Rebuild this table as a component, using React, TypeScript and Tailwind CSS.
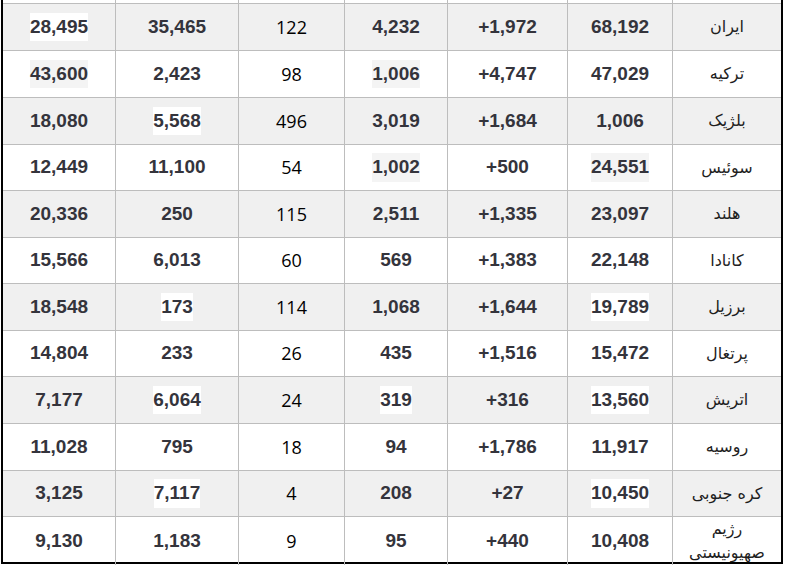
type Cell = { v: string; hl?: boolean };

const rows: { name: string[]; c: (string | Cell)[] }[] = [
  { name: ['ایران'], c: [{ v: '28,495', hl: true }, '35,465', '122', '4,232', '+1,972', '68,192'] },
  { name: ['ترکیه'], c: [{ v: '43,600', hl: true }, '2,423', '98', { v: '1,006', hl: true }, '+4,747', '47,029'] },
  { name: ['بلژیک'], c: ['18,080', { v: '5,568', hl: true }, '496', '3,019', '+1,684', '1,006'] },
  { name: ['سوئیس'], c: ['12,449', '11,100', '54', { v: '1,002', hl: true }, '+500', { v: '24,551', hl: true }] },
  { name: ['هلند'], c: ['20,336', '250', '115', '2,511', '+1,335', '23,097'] },
  { name: ['کانادا'], c: ['15,566', '6,013', '60', '569', '+1,383', '22,148'] },
  { name: ['برزیل'], c: ['18,548', { v: '173', hl: true }, '114', '1,068', '+1,644', { v: '19,789', hl: true }] },
  { name: ['پرتغال'], c: ['14,804', '233', '26', '435', '+1,516', '15,472'] },
  { name: ['اتریش'], c: ['7,177', { v: '6,064', hl: true }, '24', { v: '319', hl: true }, '+316', { v: '13,560', hl: true }] },
  { name: ['روسیه'], c: ['11,028', '795', '18', '94', '+1,786', '11,917'] },
  { name: ['کره جنوبی'], c: ['3,125', { v: '7,117', hl: true }, '4', '208', '+27', { v: '10,450', hl: true }] },
  { name: ['رژیم', 'صهیونیستی'], c: ['9,130', '1,183', '9', '95', '+440', '10,408'] },
];

const heights = ['h-[47px]', 'h-[47px]', 'h-[47px]', 'h-[46px]', 'h-[47px]', 'h-[46px]', 'h-[47px]', 'h-[46px]', 'h-[47px]', 'h-[47px]', 'h-[46px]', 'h-[46px]'];

const cols = 'grid grid-cols-[113px_123px_106px_103px_120px_105px_108px]';

export default function App() {
  return (
    <div className="w-[786px] h-[567px] bg-white overflow-hidden">
      <div className="ml-[1px] w-[782px] border-x-2 border-b-2 border-black">
        <div className={`${cols} h-[3px]`}>
          {Array.from({ length: 7 }).map((_, i) => (
            <div key={i} className={i < 6 ? 'border-r border-[#bdbdbd]' : ''} />
          ))}
        </div>
        {rows.map((r, ri) => {
          const gray = ri % 2 === 0;
          return (
            <div
              key={ri}
              className={`${cols} ${heights[ri]} border-t border-[#bdbdbd] ${gray ? 'bg-[#f0f0f0]' : 'bg-white'}`}
            >
              {r.c.map((cell, ci) => {
                const c = typeof cell === 'string' ? { v: cell } : cell;
                const plain = ci === 2;
                return (
                  <div
                    key={ci}
                    className="border-r border-[#bdbdbd] flex items-center justify-center"
                  >
                    <span
                      className={
                        plain
                          ? "font-['Open_Sans',sans-serif] text-[18px] text-black"
                          : `font-['Liberation_Sans',Arial,sans-serif] font-bold text-[19px] text-[#34343c] ${
                              c.hl ? (gray ? 'bg-white' : 'bg-[#f4f4f4]') : ''
                            }`
                      }
                    >
                      {c.v}
                    </span>
                  </div>
                );
              })}
              <div className="relative flex items-center justify-center">
                <div
                  dir="rtl"
                  className={`relative font-['DejaVu_Sans',sans-serif] text-[16px] text-[#1e1e1e] text-center ${
                    r.name.length > 1 ? 'leading-[24px]' : 'leading-[26px]'
                  }`}
                >
                  {r.name.map((n, i) => (
                    <div key={i}>{n}</div>
                  ))}
                </div>
              </div>
            </div>
          );
        })}
      </div>
    </div>
  );
}
